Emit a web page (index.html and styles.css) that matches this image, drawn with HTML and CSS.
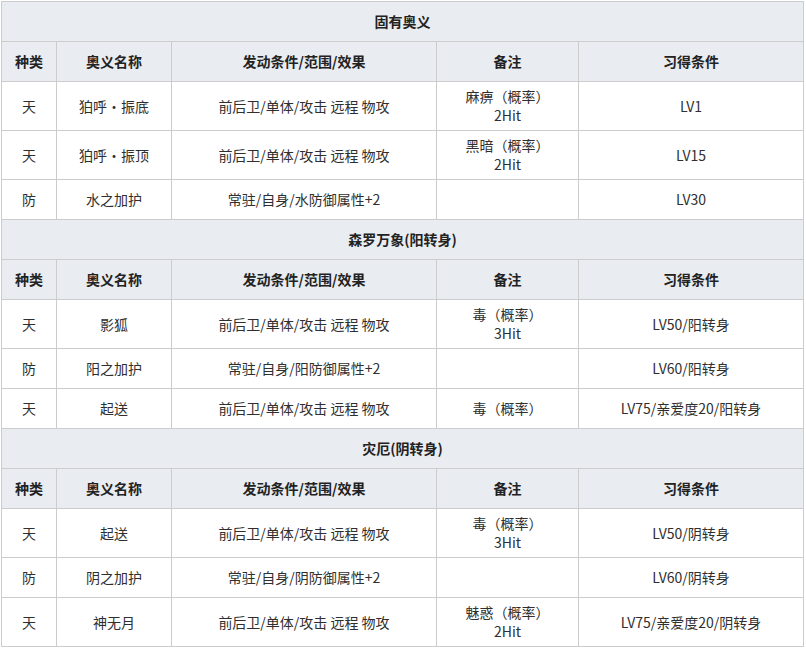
FILE: index.html
```html
<!DOCTYPE html>
<html lang="zh-CN">
<head>
<meta charset="utf-8">
<title>奥义</title>
<link rel="stylesheet" href="styles.css">
</head>
<body>
<table class="skills">
  <colgroup>
    <col class="c-type"><col class="c-name"><col class="c-cond"><col class="c-note"><col class="c-learn">
  </colgroup>
  <tbody>
    <tr class="title"><th colspan="5">固有奥义</th></tr>
    <tr class="head"><th>种类</th><th>奥义名称</th><th>发动条件/范围/效果</th><th>备注</th><th>习得条件</th></tr>
    <tr><td>天</td><td>狛呼・振底</td><td>前后卫/单体/攻击 远程 物攻</td><td>麻痹（概率）<br>2Hit</td><td>LV1</td></tr>
    <tr><td>天</td><td>狛呼・振顶</td><td>前后卫/单体/攻击 远程 物攻</td><td>黑暗（概率）<br>2Hit</td><td>LV15</td></tr>
    <tr><td>防</td><td>水之加护</td><td>常驻/自身/水防御属性+2</td><td></td><td>LV30</td></tr>
    <tr class="title"><th colspan="5">森罗万象(阳转身)</th></tr>
    <tr class="head"><th>种类</th><th>奥义名称</th><th>发动条件/范围/效果</th><th>备注</th><th>习得条件</th></tr>
    <tr><td>天</td><td>影狐</td><td>前后卫/单体/攻击 远程 物攻</td><td>毒（概率）<br>3Hit</td><td>LV50/阳转身</td></tr>
    <tr><td>防</td><td>阳之加护</td><td>常驻/自身/阳防御属性+2</td><td></td><td>LV60/阳转身</td></tr>
    <tr><td>天</td><td>起送</td><td>前后卫/单体/攻击 远程 物攻</td><td>毒（概率）</td><td>LV75/亲爱度20/阳转身</td></tr>
    <tr class="title"><th colspan="5">灾厄(阴转身)</th></tr>
    <tr class="head"><th>种类</th><th>奥义名称</th><th>发动条件/范围/效果</th><th>备注</th><th>习得条件</th></tr>
    <tr><td>天</td><td>起送</td><td>前后卫/单体/攻击 远程 物攻</td><td>毒（概率）<br>3Hit</td><td>LV50/阴转身</td></tr>
    <tr><td>防</td><td>阴之加护</td><td>常驻/自身/阴防御属性+2</td><td></td><td>LV60/阴转身</td></tr>
    <tr><td>天</td><td>神无月</td><td>前后卫/单体/攻击 远程 物攻</td><td>魅惑（概率）<br>2Hit</td><td>LV75/亲爱度20/阴转身</td></tr>
  </tbody>
</table>
</body>
</html>
```
FILE: styles.css
```css
html, body {
  margin: 0;
  padding: 0;
  background: #ffffff;
}
body {
  padding: 1px 0 0 1px;
  font-family: "Noto Sans CJK SC", "Noto Sans", sans-serif;
  font-size: 14px;
  color: #2f2f2f;
}
.skills {
  border-collapse: collapse;
  table-layout: fixed;
  width: 802px;
}
.c-type { width: 55px; }
.c-name { width: 115px; }
.c-cond { width: 265px; }
.c-note { width: 142px; }
.c-learn { width: 225px; }
.skills th,
.skills td {
  border: 1px solid #cccccc;
  padding: 5px 4px;
  line-height: 19px;
  text-align: center;
  vertical-align: middle;
}
.skills tr {
  height: 40px;
}
.skills th {
  background: #e9ecf0;
  font-weight: bold;
  color: #222222;
}
.skills td {
  background: #ffffff;
}
```
